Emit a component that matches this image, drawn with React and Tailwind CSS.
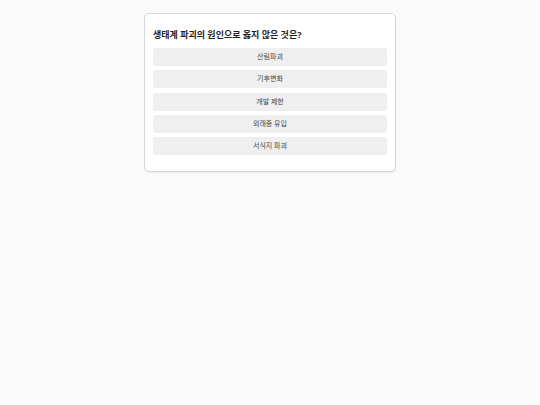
import { useState } from 'react';

const options = ['산림파괴', '기후변화', '개발 제한', '외래종 유입', '서식지 파괴'];

export default function App() {
  const [picked, setPicked] = useState(null);

  return (
    <div
      className="min-h-screen bg-[#fafafa] pt-[13px]"
      style={{ fontFamily: '"Noto Sans", "Noto Sans CJK KR", sans-serif' }}
    >
      {/* Quiz card */}
      <div className="mx-auto w-[252px] rounded-[5px] border border-[#d6d6d6] bg-white px-[8px] pt-[14px] pb-[16px] shadow-[0_1px_2px_rgba(0,0,0,0.06)]">
        <h2 className="mb-[7px] text-[9px] leading-[13px] font-bold text-[#1f1f1f]">
          생태계 파괴의 원인으로 옳지 않은 것은?
        </h2>
        <div className="flex flex-col gap-[4.25px]">
          {options.map((opt, i) => (
            <button
              key={opt}
              onClick={() => setPicked(i)}
              className={`h-[18px] w-full rounded-[3px] text-[7px] leading-[18px] text-[#444] ${
                picked === i ? 'bg-[#e4e4e4]' : 'bg-[#efefef]'
              }`}
            >
              {opt}
            </button>
          ))}
        </div>
      </div>
    </div>
  );
}
